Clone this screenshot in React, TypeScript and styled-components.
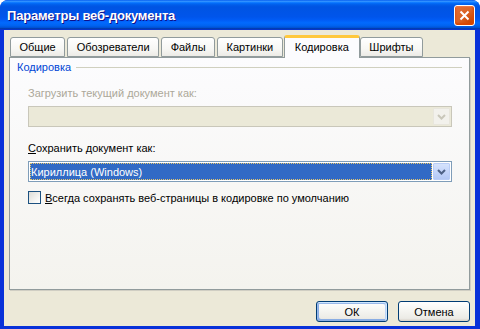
import React from 'react'
import styled, { createGlobalStyle } from 'styled-components'

const Global = createGlobalStyle`
  html, body {
    margin: 0;
    padding: 0;
    background: #fff;
  }
  body {
    font-family: "Liberation Sans", Arial, sans-serif;
    font-size: 11px;
    color: #000;
  }
`

const tabs = ['Общие', 'Обозреватели', 'Файлы', 'Картинки', 'Кодировка', 'Шрифты']
const ACTIVE = 'Кодировка'

const Chevron: React.FC<{ color: string }> = ({ color }) => (
  <svg width="9" height="6" viewBox="0 0 9 6">
    <path d="M1 1 L4.5 4.5 L8 1" fill="none" stroke={color} strokeWidth="2" />
  </svg>
)

const App: React.FC = () => {
  return (
    <>
      <Global />
      <Window>
        <TitleBar>
          <Title>Параметры веб-документа</Title>
          <CloseButton>
            <svg width="11" height="11" viewBox="0 0 11 11">
              <path d="M1.5 1.5 L9.5 9.5 M9.5 1.5 L1.5 9.5" stroke="#fff" strokeWidth="2" />
            </svg>
          </CloseButton>
        </TitleBar>
        <Client>
          <TabStrip>
            {tabs.map((t) => (
              <Tab key={t} active={t === ACTIVE}>
                {t}
              </Tab>
            ))}
          </TabStrip>
          <Panel>
            <GroupHeader>
              <span>Кодировка</span>
              <GroupLine />
            </GroupHeader>
            <Field gap={12}>
              <Label disabled>Загрузить текущий документ как:</Label>
              <Combo disabled>
                <ComboValue />
                <ComboButton disabled>
                  <Chevron color="#c9c7ba" />
                </ComboButton>
              </Combo>
            </Field>
            <Field gap={15}>
              <Label>
                <u>С</u>охранить документ как:
              </Label>
              <Combo>
                <ComboValue selected>Кириллица (Windows)</ComboValue>
                <ComboButton>
                  <Chevron color="#4d6185" />
                </ComboButton>
              </Combo>
            </Field>
            <CheckRow>
              <CheckBox />
              <span>
                <u>В</u>сегда сохранять веб-страницы в кодировке по умолчанию
              </span>
            </CheckRow>
          </Panel>
          <ButtonRow>
            <Button isDefault>ОК</Button>
            <Button>Отмена</Button>
          </ButtonRow>
        </Client>
      </Window>
    </>
  )
}

const Window = styled.div`
  width: 480px;
  height: 329px;
  box-sizing: border-box;
  display: flex;
  flex-direction: column;
  background: #0831d9;
  border-radius: 8px 8px 0 0;
  overflow: hidden;
`
const TitleBar = styled.div`
  height: 30px;
  flex-shrink: 0;
  display: flex;
  align-items: center;
  justify-content: space-between;
  padding: 0 5px 0 7px;
  box-sizing: border-box;
  background: linear-gradient(
    to bottom,
    #0058ee 0%,
    #3593ff 4%,
    #288eff 6%,
    #127dff 8%,
    #036ffc 10%,
    #0262ee 14%,
    #0057e5 20%,
    #0054e3 24%,
    #0055eb 56%,
    #005bf5 66%,
    #026afe 76%,
    #0062ef 86%,
    #0052d6 92%,
    #0040ab 94%,
    #0831d9 100%
  );
`
const Title = styled.div`
  color: #fff;
  font-family: "Liberation Sans", Arial, sans-serif;
  font-weight: bold;
  font-size: 13px;
  letter-spacing: -0.2px;
  text-shadow: 1px 1px #0f1089;
  padding-top: 1px;
`
const CloseButton = styled.div`
  width: 21px;
  height: 21px;
  box-sizing: border-box;
  border: 1px solid #fff;
  border-radius: 3px;
  display: flex;
  align-items: center;
  justify-content: center;
  background: radial-gradient(circle at 85% 85%, #cc4600 0%, #dc6527 55%, #e5703a 100%);
  box-shadow: inset 0 -1px 2px 1px #da4600, inset 1px 1px 1px #f48d64;
`
const Client = styled.div`
  flex: 1;
  margin: 0 5px 3px 4px;
  background: #ece9d8;
  display: flex;
  flex-direction: column;
  padding: 5px 5px 4px 5px;
`
const TabStrip = styled.div`
  display: flex;
  align-items: flex-end;
  padding-left: 1px;
  position: relative;
  z-index: 1;
  height: 22px;
`
const Tab = styled.div<{ active?: boolean }>`
  box-sizing: border-box;
  height: ${(p) => (p.active ? '23px' : '20px')};
  margin-bottom: ${(p) => (p.active ? '-1px' : '0')};
  margin-right: ${(p) => (p.active ? '0' : '2px')};
  padding: ${(p) => (p.active ? '3px 10px 0' : '3px 8.5px 0')};
  border: 1px solid #919b9c;
  border-bottom: ${(p) => (p.active ? 'none' : '1px solid #919b9c')};
  border-top: ${(p) => (p.active ? '3px solid #ffc83c' : '1px solid #919b9c')};
  border-radius: 3px 3px 0 0;
  background: ${(p) =>
    p.active ? '#fcfcfe' : 'linear-gradient(to bottom, #ffffff 0%, #f7f7f4 60%, #ecebe6 100%)'};
  white-space: nowrap;
  &:nth-child(4) {
    margin-right: 1px;
  }
`
const Panel = styled.div`
  height: 233px;
  box-sizing: border-box;
  border: 1px solid #919b9c;
  box-shadow: 1px 1px 0 #d0cec3;
  background: linear-gradient(to bottom, #fcfcfe 0%, #f4f3ee 100%);
  padding: 2px 17px 0 7px;
  display: flex;
  flex-direction: column;
`
const GroupHeader = styled.div`
  display: flex;
  align-items: center;
  gap: 5px;
  color: #0046d5;
  height: 15px;
  line-height: 15px;
  margin-right: -10px;
`
const GroupLine = styled.div`
  flex: 1;
  height: 1px;
  background: #d0d0bf;
`
const Field = styled.div<{ gap: number }>`
  display: flex;
  flex-direction: column;
  padding-left: 11px;
  margin-top: ${(p) => p.gap}px;
`
const Label = styled.div<{ disabled?: boolean }>`
  color: ${(p) => (p.disabled ? '#aca899' : '#000')};
  height: 13px;
  line-height: 13px;
  margin-bottom: 6px;
  u {
    text-underline-offset: 1px;
  }
`
const Combo = styled.div<{ disabled?: boolean }>`
  height: 21px;
  box-sizing: border-box;
  border: 1px solid ${(p) => (p.disabled ? '#c9c7ba' : '#7f9db9')};
  background: ${(p) => (p.disabled ? '#ebe9d8' : '#fff')};
  display: flex;
  padding: 1px;
  gap: 1px;
`
const ComboValue = styled.div<{ selected?: boolean }>`
  flex: 1;
  display: flex;
  align-items: center;
  padding-left: 1px;
  color: #fff;
  background: ${(p) => (p.selected ? '#316ac5' : 'transparent')};
  outline: ${(p) => (p.selected ? '1px dotted #e6c66a' : 'none')};
  outline-offset: -1px;
`
const ComboButton = styled.div<{ disabled?: boolean }>`
  width: 17px;
  box-sizing: border-box;
  display: flex;
  align-items: center;
  justify-content: center;
  border-radius: 1px;
  border: 1px solid ${(p) => (p.disabled ? '#e8e6dd' : '#b9cdf6')};
  background: ${(p) =>
    p.disabled
      ? '#f2f1ec'
      : 'linear-gradient(to bottom, #d6e3fc 0%, #c4d5fa 50%, #b3c8f5 100%)'};
`
const CheckRow = styled.div`
  display: flex;
  align-items: center;
  gap: 4px;
  padding-left: 11px;
  margin-top: 8px;
  height: 15px;
`
const CheckBox = styled.div`
  width: 13px;
  height: 13px;
  box-sizing: border-box;
  border: 1px solid #1c5180;
  background: linear-gradient(135deg, #dcdcd7 0%, #f6f6f4 70%, #ffffff 100%);
`
const ButtonRow = styled.div`
  display: flex;
  justify-content: flex-end;
  gap: 10px;
  margin-top: 11px;
`
const Button = styled.div<{ isDefault?: boolean }>`
  width: 72px;
  height: 21px;
  box-sizing: border-box;
  display: flex;
  align-items: center;
  justify-content: center;
  border: 1px solid #003c74;
  border-radius: 3px;
  background: linear-gradient(to bottom, #ffffff 0%, #f4f4f0 50%, #ecebe6 86%, #d6d0c5 100%);
  box-shadow: ${(p) =>
    p.isDefault
      ? 'inset -1px 1px #cee7ff, inset 1px 2px #98b8ea, inset -2px 2px #bcd4f6, inset 1px -1px #89ade4, inset 2px -2px #89ade4'
      : 'none'};
`

export default App
